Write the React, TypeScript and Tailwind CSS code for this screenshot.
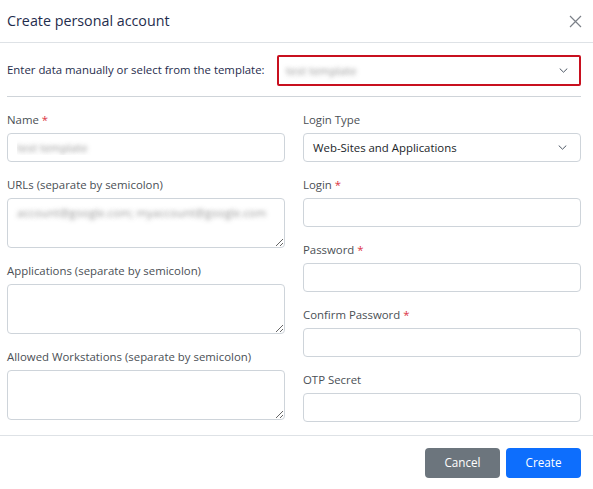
import React from 'react';

const Req = () => <span className="text-[#dc3545] ml-[3px]">*</span>;

const blurText = 'text-transparent [text-shadow:0_0_4px_rgba(70,70,70,0.55)]';

const Chevron = () => (
  <svg width="9" height="5" viewBox="0 0 9 5" fill="none" className="shrink-0">
    <path d="M1 0.8l3.5 3.4 3.5-3.4" stroke="#4b5563" strokeWidth="1" strokeLinecap="round" strokeLinejoin="round" />
  </svg>
);

const Field = ({ label, required, children }: { label: string; required?: boolean; children: React.ReactNode }) => (
  <div className="flex flex-col">
    <div className="h-[20px] pt-[2px] leading-[18px] text-[11.4px] text-[#4a4f55] mb-[4px] whitespace-nowrap">
      {label}
      {required && <Req />}
    </div>
    {children}
  </div>
);

const Input = ({ value, blurred }: { value?: string; blurred?: boolean }) => (
  <input
    readOnly
    value={value ?? ''}
    className={`h-[29px] w-full rounded-[4px] border border-[#ced4da] px-[9px] text-[11.4px] outline-none ${blurred ? blurText : 'text-[#212529]'}`}
  />
);

const Area = ({ value }: { value?: string }) => (
  <textarea
    readOnly
    value={value ?? ''}
    wrap="off"
    className={`h-[50px] w-full overflow-hidden rounded-[4px] border border-[#ced4da] px-[9px] py-[5px] text-[11.4px] outline-none ${value ? blurText : ''}`}
  />
);

export default function App() {
  return (
    <div className="w-[593px] h-[489px] bg-white font-['Open_Sans',sans-serif] overflow-hidden">
      {/* header */}
      <div className="h-[43px] flex items-center justify-between pl-[7px] pr-[11px] border-b border-[#dee2e6]">
        <h1 className="text-[14.3px] text-[#1f2d4d] font-normal">Create personal account</h1>
        <svg width="13" height="13" viewBox="0 0 13 13">
          <path d="M1 1l11 11M12 1L1 12" stroke="#7b8088" strokeWidth="1.2" />
        </svg>
      </div>

      <div className="pl-[7px] pr-[12px]">
        {/* template row */}
        <div className="flex items-center h-[54px] border-b border-[#cfd4d9]">
          <span className="text-[11.4px] text-[#1f2d4d] w-[270px] shrink-0 whitespace-nowrap">Enter data manually or select from the template:</span>
          <div className="flex items-center justify-between h-[31px] flex-1 border-2 border-[#c8101f] rounded-[2px] pl-[7px] pr-[11px] mt-[2px]">
            <span className={`text-[11.4px] ${blurText}`}>test template</span>
            <Chevron />
          </div>
        </div>

        {/* form */}
        <div className="grid grid-cols-2 gap-x-[18px] pt-[12px] h-[338px]">
          <div className="flex flex-col gap-[12px]">
            <Field label="Name" required>
              <Input value="test template" blurred />
            </Field>
            <Field label="URLs (separate by semicolon)">
              <Area value="account@google.com; myaccount@google.com" />
            </Field>
            <Field label="Applications (separate by semicolon)">
              <Area />
            </Field>
            <Field label="Allowed Workstations (separate by semicolon)">
              <Area />
            </Field>
          </div>
          <div className="flex flex-col gap-[12px]">
            <Field label="Login Type">
              <div className="flex items-center justify-between h-[29px] rounded-[4px] border border-[#ced4da] pl-[9px] pr-[13px] text-[11.4px] text-[#212529]">
                <span>Web-Sites and Applications</span>
                <Chevron />
              </div>
            </Field>
            <Field label="Login" required>
              <Input />
            </Field>
            <Field label="Password" required>
              <Input />
            </Field>
            <Field label="Confirm Password" required>
              <Input />
            </Field>
            <Field label="OTP Secret">
              <Input />
            </Field>
          </div>
        </div>
      </div>

      {/* footer */}
      <div className="border-t border-[#dee2e6] flex justify-end gap-[6px] pr-[12px] pt-[12px]">
        <button className="h-[30px] w-[75px] rounded-[4px] bg-[#6c757d] text-white text-[11.7px]">Cancel</button>
        <button className="h-[30px] w-[75px] rounded-[4px] bg-[#0d6efd] text-white text-[11.7px]">Create</button>
      </div>
    </div>
  );
}
